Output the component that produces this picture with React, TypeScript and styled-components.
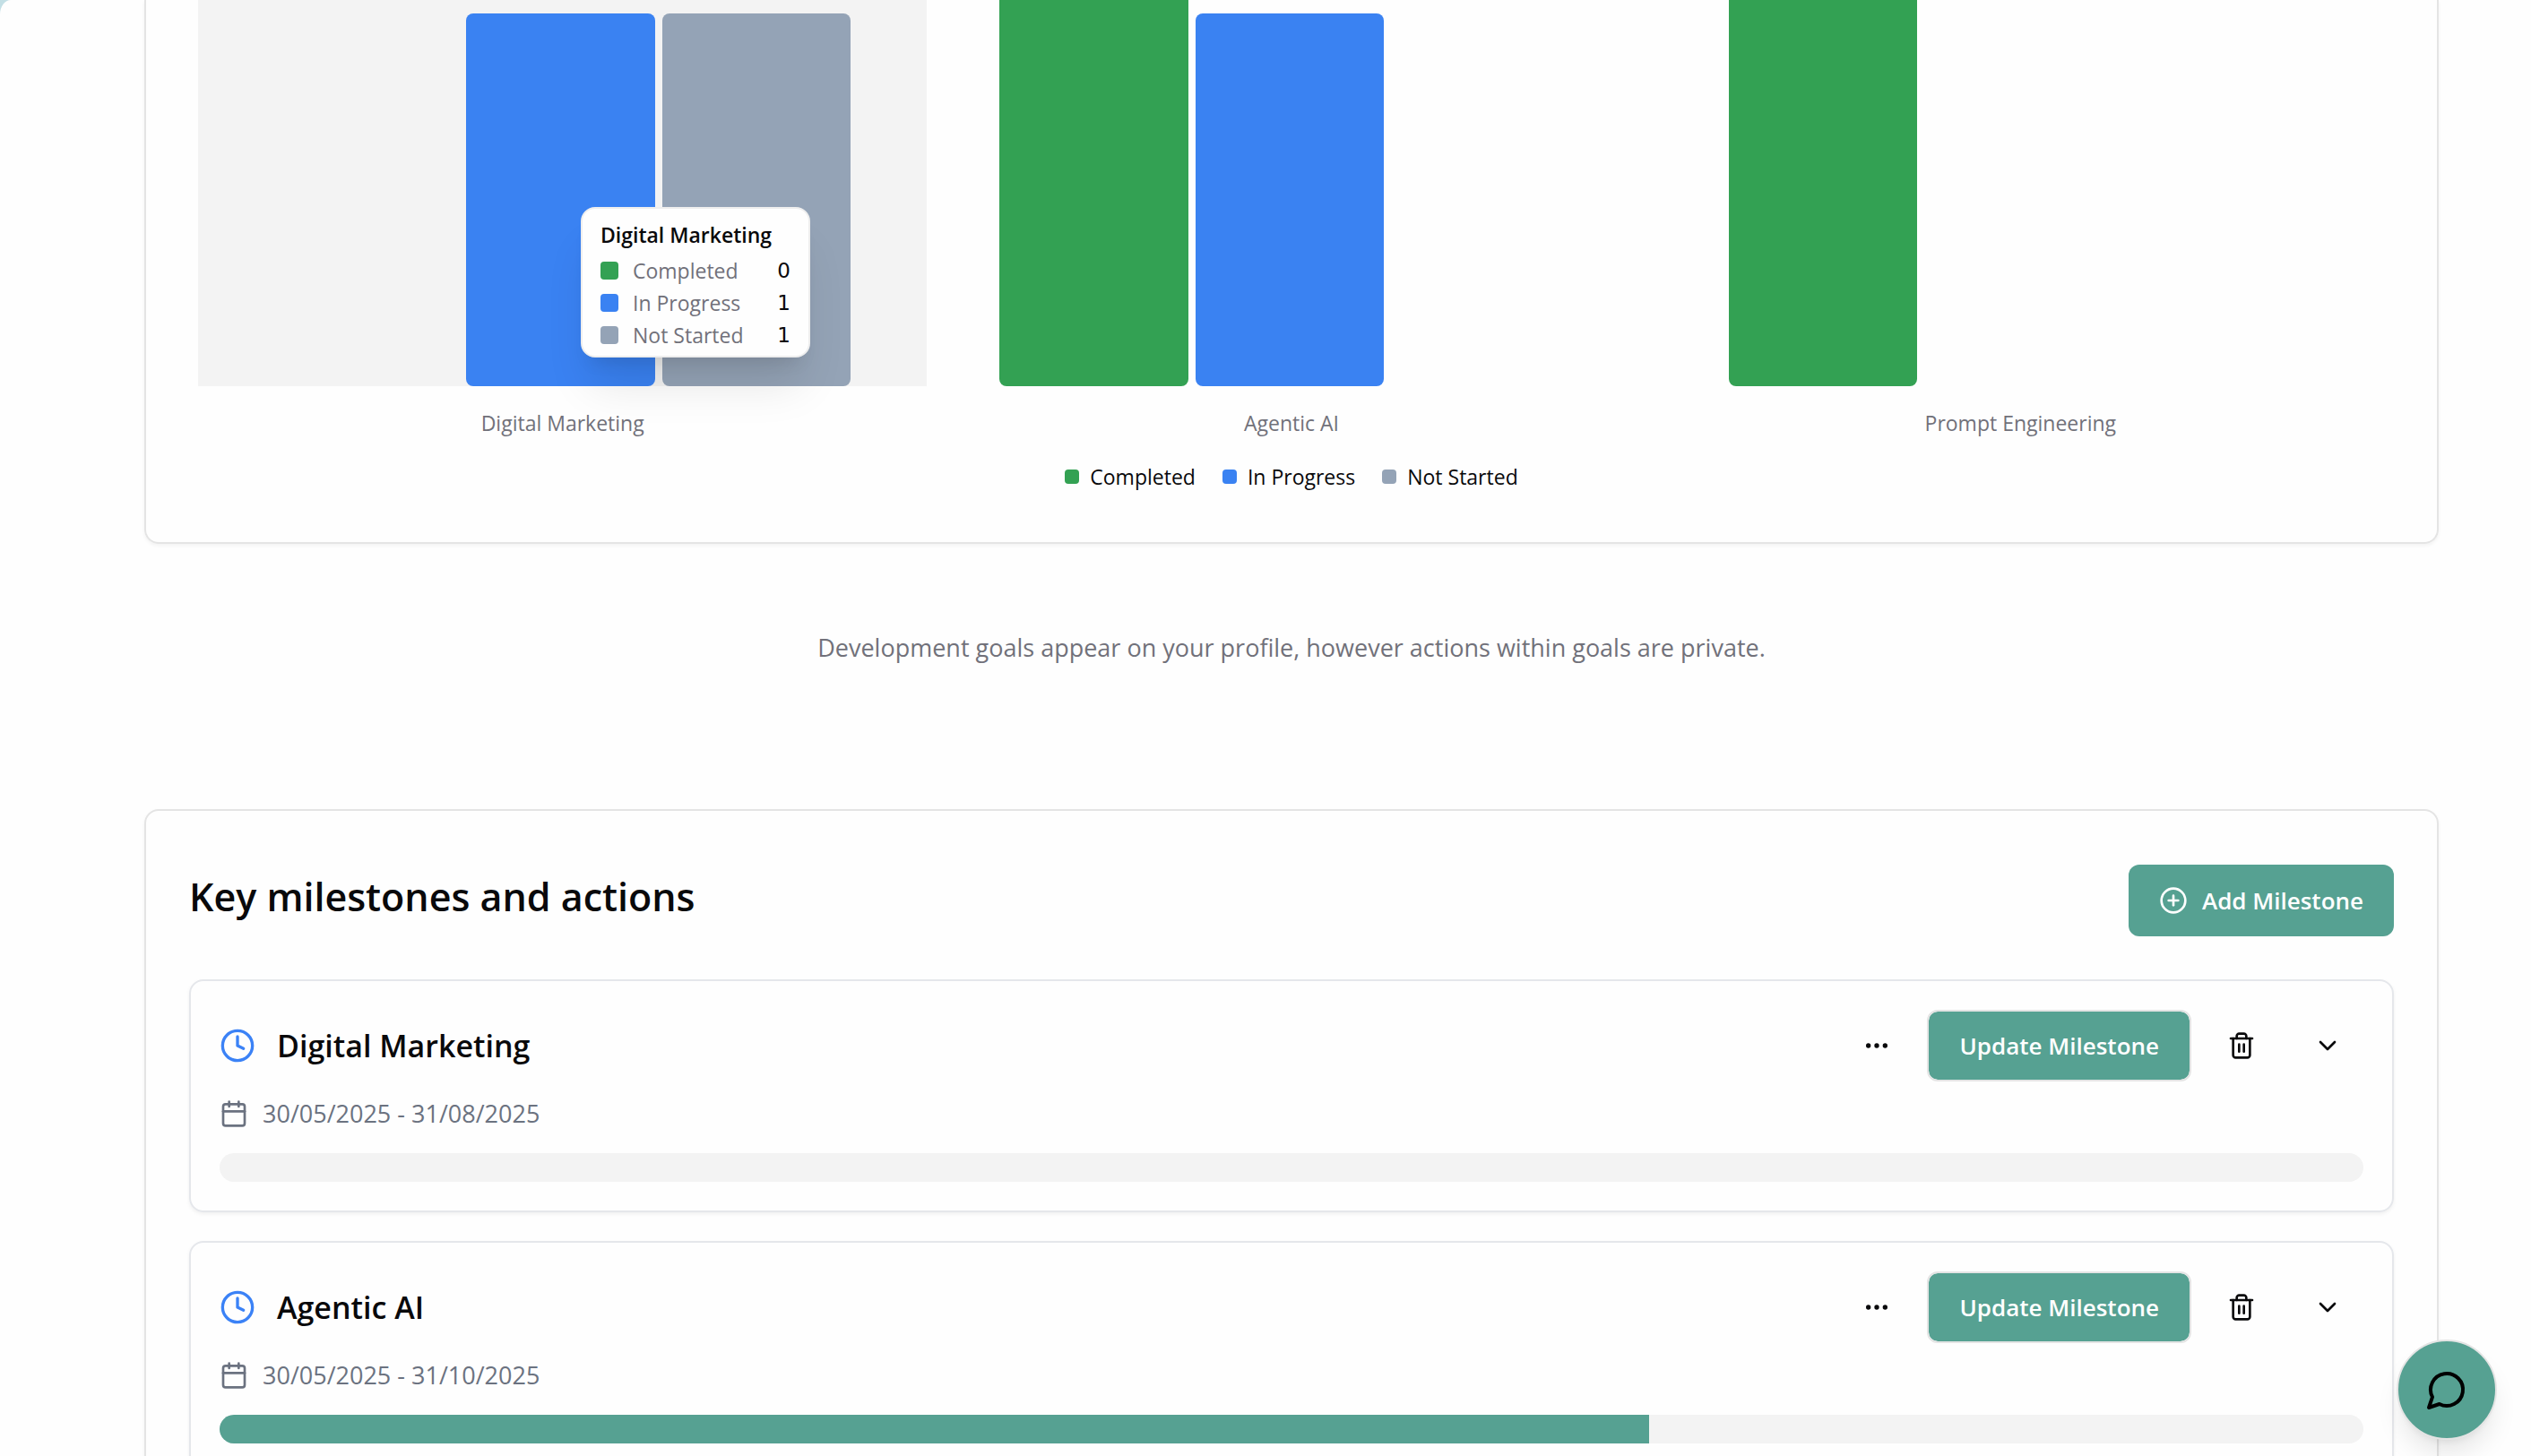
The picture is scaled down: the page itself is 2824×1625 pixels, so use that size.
import React from 'react';
import styled, { createGlobalStyle } from 'styled-components';
import { Calendar, ChevronDown, CirclePlus, Clock, Ellipsis } from 'lucide-react';

const color = {
  ink: '#09090b',
  muted: '#71717a',
  slate: '#6b7280',
  line: '#e4e4e4',
  lineCool: '#e5e7eb',
  surface: '#fefefe',
  track: '#f3f3f3',
  brand: '#56a192',
  green: '#33a153',
  blue: '#3a82f2',
  grey: '#94a3b6',
};

const GlobalStyle = createGlobalStyle`
  *, *::before, *::after { box-sizing: border-box; }
  html, body { margin: 0; }
  body {
    background: #c3dfe5;
    color: ${color.ink};
    font-family: "Open Sans", "Noto Sans", sans-serif;
    font-size: 26px;
    line-height: 40px;
  }
  h2, h3, p, ul, dl, dd { margin: 0; padding: 0; }
  button { font: inherit; color: inherit; cursor: pointer; }
`;

const Page = styled.main`
  height: 100vh;
  overflow: hidden;
  padding: 0 103px 0 161px;
  background: ${color.surface};
  border-top-left-radius: 12px 16px;
`;

const Card = styled.section`
  border: 2px solid ${color.line};
  border-radius: 16px;
  padding: 60px 48px 48px;
  box-shadow: 0 2px 4px rgba(0, 0, 0, 0.05);
`;

const ChartCard = styled(Card)`
  border-top: 0;
  border-top-left-radius: 0;
  border-top-right-radius: 0;
  padding: 0 58px 56px;
`;

const Plot = styled.div`
  position: relative;
  display: grid;
  grid-template-columns: repeat(3, 1fr);
  height: 431px;
`;

const Category = styled.div<{ $active?: boolean }>`
  display: grid;
  grid-template-columns: repeat(3, 1fr);
  grid-template-rows: 100%;
  gap: 8px;
  align-items: end;
  height: 431px;
  overflow: hidden;
  padding: 0 85px 0 81px;
  background: ${(p) => (p.$active ? color.track : 'transparent')};
`;

const Bar = styled.div<{ $tone: string }>`
  border-radius: 8px;
  background: ${(p) => p.$tone};
`;

const AxisLabels = styled.div`
  display: grid;
  grid-template-columns: repeat(3, 1fr);
  padding-top: 24px;
  color: ${color.muted};
  font-size: 23px;
  line-height: 34px;
  text-align: center;
`;

const Legend = styled.ul`
  display: flex;
  justify-content: center;
  gap: 30px;
  padding-top: 26px;
  list-style: none;
  font-size: 23px;
  line-height: 34px;
`;

const LegendItem = styled.li`
  display: flex;
  align-items: center;
  gap: 12px;
`;

const Swatch = styled.span<{ $tone: string; $size: number }>`
  width: ${(p) => p.$size}px;
  height: ${(p) => p.$size}px;
  border-radius: 4px;
  background: ${(p) => p.$tone};
`;

const Tooltip = styled.div`
  position: absolute;
  left: 427px;
  top: 231px;
  width: 256px;
  padding: 11px 20px 5px;
  border: 2px solid #eeeeee;
  border-radius: 16px;
  background: ${color.surface};
  box-shadow: 0 40px 50px -10px rgba(0, 0, 0, 0.1), 0 16px 20px -12px rgba(0, 0, 0, 0.1);
  font-size: 23px;
  line-height: 36px;
`;

const TooltipTitle = styled.p`
  font-weight: 600;
  padding-bottom: 4px;
`;

const TooltipRow = styled.div`
  display: flex;
  align-items: center;
  gap: 16px;
`;

const TooltipName = styled.dt`
  flex: 1;
  color: ${color.muted};
`;

const TooltipValue = styled.dd`
  font-family: "DejaVu Sans", sans-serif;
`;

const Note = styled.p`
  padding: 96px 0 160px;
  color: ${color.muted};
  font-size: 27px;
  text-align: center;
`;

const SectionHeader = styled.header`
  display: flex;
  justify-content: space-between;
  align-items: flex-start;
  margin-bottom: 48px;
`;

const SectionTitle = styled.h2`
  font-size: 43px;
  font-weight: 600;
  line-height: 72px;
`;

const SolidButton = styled.button<{ $outlined?: boolean }>`
  display: flex;
  align-items: center;
  gap: 16px;
  height: 80px;
  padding: 0 34px;
  border: ${(p) => (p.$outlined ? `2px solid ${color.line}` : '0')};
  border-radius: 12px;
  background: ${color.brand};
  background-clip: padding-box;
  color: #ffffff;
  font-weight: 600;
`;

const IconButton = styled.button`
  display: grid;
  place-items: center;
  width: 80px;
  height: 80px;
  border: 0;
  border-radius: 12px;
  background: transparent;
`;

const MilestoneList = styled.div`
  display: grid;
  gap: 32px;
`;

const MilestoneCard = styled.article`
  border: 2px solid ${color.lineCool};
  border-radius: 16px;
  padding: 32px;
  box-shadow: 0 2px 4px rgba(0, 0, 0, 0.06);
`;

const MilestoneHeader = styled.div`
  display: flex;
  align-items: center;
  gap: 24px;
`;

const MilestoneTitle = styled.h3`
  flex: 1;
  font-size: 34px;
  font-weight: 600;
  line-height: 48px;
`;

const Actions = styled.div`
  display: flex;
  gap: 16px;
`;

const Dates = styled.div`
  display: flex;
  align-items: center;
  gap: 16px;
  margin: 16px 0 24px;
  color: ${color.slate};
  font-size: 27px;
`;

const Track = styled.div`
  height: 32px;
  overflow: hidden;
  border-radius: 16px;
  background: ${color.track};
`;

const Fill = styled.div`
  height: 32px;
  background: ${color.brand};
`;

const ChatButton = styled.button`
  position: fixed;
  right: 38px;
  bottom: 18px;
  display: grid;
  place-items: center;
  width: 112px;
  height: 112px;
  padding: 0;
  border: 2px solid ${color.line};
  border-radius: 50%;
  background: ${color.brand};
  color: #000000;
  box-shadow: 0 20px 30px -6px rgba(0, 0, 0, 0.1), 0 8px 12px -8px rgba(0, 0, 0, 0.1);
`;

const series = [
  { key: 'completed', name: 'Completed', tone: color.green },
  { key: 'inProgress', name: 'In Progress', tone: color.blue },
  { key: 'notStarted', name: 'Not Started', tone: color.grey },
] as const;

const categories = [
  { name: 'Digital Marketing', completed: 0, inProgress: 1, notStarted: 1 },
  { name: 'Agentic AI', completed: 2, inProgress: 1, notStarted: 0 },
  { name: 'Prompt Engineering', completed: 2, inProgress: 0, notStarted: 0 },
];

const milestones = [
  { title: 'Digital Marketing', dates: '30/05/2025 - 31/08/2025', progress: 0 },
  { title: 'Agentic AI', dates: '30/05/2025 - 31/10/2025', progress: 66.66 },
];

const UNIT_HEIGHT = 416;

const stroke = {
  viewBox: '0 0 24 24',
  fill: 'none',
  stroke: 'currentColor',
  strokeWidth: 2,
  strokeLinecap: 'round',
  strokeLinejoin: 'round',
} as const;

const TrashIcon = () => (
  <svg width="32" height="32" {...stroke}>
    <path d="M3 6h18" />
    <path d="M19 6v14c0 1-1 2-2 2H7c-1 0-2-1-2-2V6" />
    <path d="M8 6V4c0-1 1-2 2-2h4c1 0 2 1 2 2v2" />
    <path d="M10 11v6" />
    <path d="M14 11v6" />
  </svg>
);

const ChatIcon = () => (
  <svg width="48" height="48" {...stroke}>
    <path d="M7.9 20A9 9 0 1 0 4 16.1L2 22Z" />
  </svg>
);

function GoalsChart() {
  const active = categories[0];
  return (
    <ChartCard>
      <Plot>
        {categories.map((c) => (
          <Category key={c.name} $active={c === active}>
            {series.map((s) => (
              <Bar key={s.key} $tone={s.tone} style={{ height: c[s.key] * UNIT_HEIGHT }} />
            ))}
          </Category>
        ))}
        <Tooltip role="tooltip">
          <TooltipTitle>{active.name}</TooltipTitle>
          <dl>
            {series.map((s) => (
              <TooltipRow key={s.key}>
                <Swatch $tone={s.tone} $size={20} />
                <TooltipName>{s.name}</TooltipName>
                <TooltipValue>{active[s.key]}</TooltipValue>
              </TooltipRow>
            ))}
          </dl>
        </Tooltip>
      </Plot>
      <AxisLabels>
        {categories.map((c) => (
          <span key={c.name}>{c.name}</span>
        ))}
      </AxisLabels>
      <Legend>
        {series.map((s) => (
          <LegendItem key={s.key}>
            <Swatch $tone={s.tone} $size={16} />
            {s.name}
          </LegendItem>
        ))}
      </Legend>
    </ChartCard>
  );
}

function Milestone({ title, dates, progress }: { title: string; dates: string; progress: number }) {
  return (
    <MilestoneCard>
      <MilestoneHeader>
        <Clock size={40} color="#3b82f6" />
        <MilestoneTitle>{title}</MilestoneTitle>
        <Actions>
          <IconButton aria-label="More options"><Ellipsis size={32} /></IconButton>
          <SolidButton $outlined>Update Milestone</SolidButton>
          <IconButton aria-label="Delete milestone"><TrashIcon /></IconButton>
          <IconButton aria-label="Expand milestone"><ChevronDown size={32} /></IconButton>
        </Actions>
      </MilestoneHeader>
      <Dates>
        <Calendar size={32} />
        <span>{dates}</span>
      </Dates>
      <Track role="progressbar" aria-label={title} aria-valuenow={progress} aria-valuemin={0} aria-valuemax={100}>
        <Fill style={{ width: `${progress}%` }} />
      </Track>
    </MilestoneCard>
  );
}

export default function App() {
  return (
    <>
      <GlobalStyle />
      <Page>
        <GoalsChart />
        <Note>Development goals appear on your profile, however actions within goals are private.</Note>
        <Card>
          <SectionHeader>
            <SectionTitle>Key milestones and actions</SectionTitle>
            <SolidButton>
              <CirclePlus size={32} />
              Add Milestone
            </SolidButton>
          </SectionHeader>
          <MilestoneList>
            {milestones.map((m) => (
              <Milestone key={m.title} {...m} />
            ))}
          </MilestoneList>
        </Card>
      </Page>
      <ChatButton aria-label="Open chat"><ChatIcon /></ChatButton>
    </>
  );
}
